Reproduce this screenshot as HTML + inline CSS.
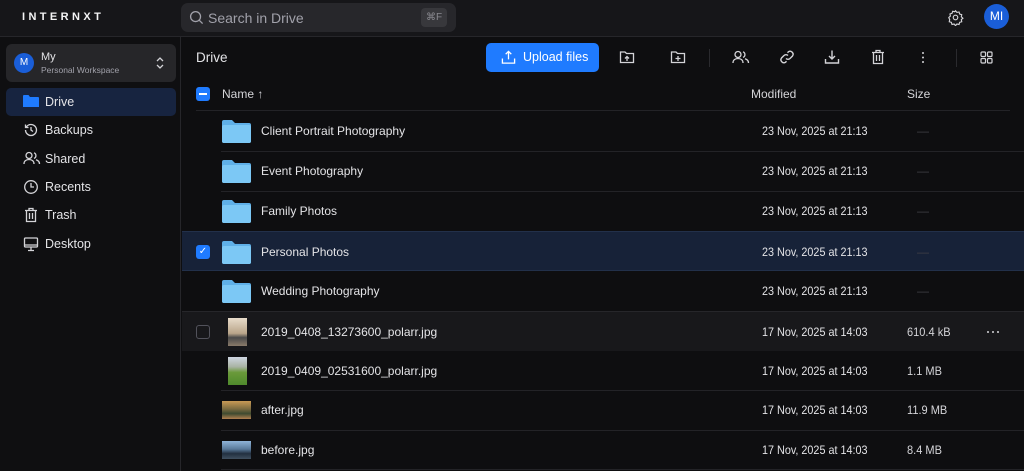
<!DOCTYPE html>
<html><head><style>
*{margin:0;padding:0;box-sizing:border-box}
body{width:1024px;height:471px;overflow:hidden;background:#0e0e10;font-family:"Liberation Sans",sans-serif;color:#e4e4e7;position:relative}
.top{position:absolute;left:0;top:0;width:1024px;height:37px;background:#161619;border-bottom:1px solid #26262a}
.logo{position:absolute;left:22px;top:11px;font-size:11px;font-weight:bold;letter-spacing:3.4px;color:#f4f4f5}
.search{position:absolute;left:181px;top:3px;width:275px;height:29px;background:#27272b;border-radius:7px}
.search span{position:absolute;left:27px;top:7px;font-size:14px;color:#a1a1aa}
.kbd{position:absolute;right:9px;top:5px;width:26px;height:19px;background:#38383c;border-radius:4px;font-size:10px;color:#8a8a90;text-align:center;line-height:19px}
.side{position:absolute;left:0;top:37px;width:181px;height:434px;background:#0f0f11;border-right:1px solid #26262a}
.ws{position:absolute;left:6px;top:7px;width:170px;height:38px;background:#262629;border-radius:6px}
.av{position:absolute;border-radius:50%;background:#1a5ed8;color:#fff;text-align:center}
.nav{position:absolute;left:6px;width:170px;height:28px;border-radius:5px;font-size:12.5px;color:#e4e4e7}
.nav span{position:absolute;left:39px;top:7px}
.nav svg{position:absolute;left:17px;top:6px}
.btn{position:absolute;left:486px;top:43px;width:113px;height:29px;background:#1f7bff;border-radius:5px;color:#fff;font-size:12.5px}
.ic{position:absolute;top:49px}
.row{position:absolute;left:182px;width:842px;height:40px}
.row .n{position:absolute;left:79px;top:13px;font-size:12px;color:#e4e4e7}
.row .m{position:absolute;left:580px;top:13px;font-size:12px;color:#e4e4e7;transform:scaleX(0.9);transform-origin:left;white-space:nowrap}
.row .s{position:absolute;left:725px;top:13px;font-size:12px;color:#d4d4d8;transform:scaleX(0.92);transform-origin:left;white-space:nowrap}
.row .d{position:absolute;left:735px;top:13px;font-size:12px;color:#3f3f45}
.line{position:absolute;height:1px;background:#232327}
.fold{position:absolute;left:40px;top:8px;width:29px;height:24px}
.cb{position:absolute;left:14px;top:13px;width:14px;height:14px;border-radius:3px}
</style></head><body>
<div class="top">
<div class="logo">INTERNXT</div>
<div class="search"><svg style="position:absolute;left:8px;top:7px" width="15" height="15" viewBox="0 0 16 16" fill="none" stroke="#a1a1aa" stroke-width="1.4"><circle cx="7" cy="7" r="5.3"/><path d="M11 11l3.5 3.5"/></svg><span>Search in Drive</span><div class="kbd">⌘F</div></div>
<svg style="position:absolute;left:947px;top:9px" width="17" height="17" viewBox="0 0 24 24" fill="none" stroke="#d4d4d8" stroke-width="1.6"><circle cx="12" cy="12" r="3.2"/><path d="M12 2.5l2 2.3 3-.6.9 2.9 2.9.9-.6 3 2.3 2-2.3 2 .6 3-2.9.9-.9 2.9-3-.6-2 2.3-2-2.3-3 .6-.9-2.9-2.9-.9.6-3L2.5 12l2.3-2-.6-3 2.9-.9.9-2.9 3 .6z"/></svg>
<div class="av" style="left:984px;top:4px;width:25px;height:25px;font-size:12px;line-height:25px">MI</div>
</div>
<div class="side">
<div class="ws"><div class="av" style="left:8px;top:9px;width:20px;height:20px;font-size:10px;line-height:20px">M</div>
<div style="position:absolute;left:35px;top:7px;font-size:11px;color:#e4e4e7">My</div>
<div style="position:absolute;left:35px;top:21px;font-size:8.5px;color:#a1a1aa">Personal Workspace</div>
<svg style="position:absolute;left:150px;top:13px" width="8" height="12" viewBox="0 0 8 12" fill="none" stroke="#d4d4d8" stroke-width="1.3"><path d="M1 4l3-3 3 3M1 8l3 3 3-3"/></svg></div>
<div class="nav" style="top:51px;background:#172440"><svg width="16" height="14" viewBox="0 0 16 14"><path d="M0 2a1 1 0 011-1h4.5l1.5 2h8a1 1 0 011 1v9H0z" fill="#1f7bff"/></svg><span>Drive</span></div>
<div class="nav" style="top:79px"><svg width="16" height="16" viewBox="0 0 16 16" fill="none" stroke="#d4d4d8" stroke-width="1.3"><path d="M2.5 8a5.5 5.5 0 105.5-5.5A5.5 5.5 0 003.3 5M2.5 2.5v3h3M8 5v3l2 1.5"/></svg><span>Backups</span></div>
<div class="nav" style="top:108px"><svg width="18" height="14" viewBox="0 0 18 14" fill="none" stroke="#d4d4d8" stroke-width="1.3"><circle cx="6" cy="4.5" r="3"/><path d="M1 13c0-3 2.2-4.5 5-4.5s5 1.5 5 4.5M11 1.8a3 3 0 010 5.6M13 8.8c2 .6 3.5 2 3.5 4.2"/></svg><span>Shared</span></div>
<div class="nav" style="top:136px"><svg width="16" height="16" viewBox="0 0 16 16" fill="none" stroke="#d4d4d8" stroke-width="1.3"><circle cx="8" cy="8" r="6.3"/><path d="M8 4v4h3"/></svg><span>Recents</span></div>
<div class="nav" style="top:164px"><svg width="16" height="16" viewBox="0 0 16 16" fill="none" stroke="#d4d4d8" stroke-width="1.3"><path d="M2 3.5h12M6 3.5V1.5h4v2M3.5 3.5v11h9v-11M6.5 6v6M9.5 6v6"/></svg><span>Trash</span></div>
<div class="nav" style="top:193px"><svg width="16" height="16" viewBox="0 0 16 16" fill="none" stroke="#d4d4d8" stroke-width="1.3"><rect x="1.5" y="2" width="13" height="9" rx="1"/><path d="M1.5 9h13M8 11v3M5 14.5h6"/></svg><span>Desktop</span></div>
</div>
<div style="position:absolute;left:196px;top:50px;font-size:13.5px;color:#e4e4e7">Drive</div>
<div class="btn"><svg style="position:absolute;left:15px;top:7px" width="15" height="15" viewBox="0 0 16 16" fill="none" stroke="#fff" stroke-width="1.4"><path d="M8 10V1.5M5 4.5l3-3 3 3M1.5 9v5h13V9"/></svg><span style="position:absolute;left:37px;top:7px">Upload files</span></div>
<svg class="ic" style="left:619px" width="16" height="16" viewBox="0 0 16 16" fill="none" stroke="#d4d4d8" stroke-width="1.3"><path d="M1.5 3h4.5l1.5 1.5h7v9h-13zM8 12V7.5M6 9.5l2-2 2 2"/></svg>
<svg class="ic" style="left:670px" width="16" height="16" viewBox="0 0 16 16" fill="none" stroke="#d4d4d8" stroke-width="1.3"><path d="M1.5 3h4.5l1.5 1.5h7v9h-13zM8 7v5M5.5 9.5h5"/></svg>
<div style="position:absolute;left:709px;top:49px;width:1px;height:18px;background:#2a2a2e"></div>
<svg class="ic" style="left:732px" width="18" height="16" viewBox="0 0 18 14" fill="none" stroke="#d4d4d8" stroke-width="1.3"><circle cx="6" cy="4.5" r="3"/><path d="M1 13c0-3 2.2-4.5 5-4.5s5 1.5 5 4.5M11 1.8a3 3 0 010 5.6M13 8.8c2 .6 3.5 2 3.5 4.2"/></svg>
<svg class="ic" style="left:779px" width="16" height="16" viewBox="0 0 16 16" fill="none" stroke="#d4d4d8" stroke-width="1.4"><path d="M7 9.5a3 3 0 004 0l2.5-2.5a3 3 0 00-4-4.3L8.5 3.7M9 6.5a3 3 0 00-4 0L2.5 9a3 3 0 004 4.3l1-1"/></svg>
<svg class="ic" style="left:824px" width="16" height="16" viewBox="0 0 16 16" fill="none" stroke="#d4d4d8" stroke-width="1.4"><path d="M8 1.5V10M5 7l3 3 3-3M1.5 10v4h13v-4"/></svg>
<svg class="ic" style="left:870px" width="16" height="16" viewBox="0 0 16 16" fill="none" stroke="#d4d4d8" stroke-width="1.3"><path d="M2 3.5h12M6 3.5V1.5h4v2M3.5 3.5v11h9v-11M6.5 6v6M9.5 6v6"/></svg>
<svg style="position:absolute;left:921px;top:51px" width="4" height="13" viewBox="0 0 4 13" fill="#d4d4d8"><circle cx="2" cy="2" r="1"/><circle cx="2" cy="6.5" r="1"/><circle cx="2" cy="11" r="1"/></svg>
<div style="position:absolute;left:956px;top:49px;width:1px;height:18px;background:#2a2a2e"></div>
<svg class="ic" style="left:980px;top:51px" width="13" height="13" viewBox="0 0 13 13" fill="none" stroke="#d4d4d8" stroke-width="1.2"><rect x="1" y="1" width="4.5" height="4.5" rx="1"/><rect x="7.5" y="1" width="4.5" height="4.5" rx="1"/><rect x="1" y="7.5" width="4.5" height="4.5" rx="1"/><rect x="7.5" y="7.5" width="4.5" height="4.5" rx="1"/></svg>
<div style="position:absolute;left:196px;top:87px;width:14px;height:14px;background:#1f7bff;border-radius:3px"><div style="position:absolute;left:3px;top:6px;width:8px;height:2px;background:#fff"></div></div>
<div style="position:absolute;left:222px;top:87px;font-size:12px;color:#d4d4d8">Name ↑</div>
<div style="position:absolute;left:751px;top:87px;font-size:12px;color:#d4d4d8">Modified</div>
<div style="position:absolute;left:907px;top:87px;font-size:12px;color:#d4d4d8">Size</div>
<div class="line" style="left:196px;top:110px;width:814px"></div>

<div class="row" style="top:111px"><svg class="fold" viewBox="0 0 29 24"><path d="M0 3a2 2 0 012-2h8l3 3h14a2 2 0 012 2v16a2 2 0 01-2 2H2a2 2 0 01-2-2z" fill="#5fb0e8"/><rect x="0" y="6" width="29" height="18" rx="2" fill="#7cc8f5"/></svg><span class="n">Client Portrait Photography</span><span class="m">23 Nov, 2025 at 21:13</span><span class="d">—</span></div>
<div class="line" style="left:221px;top:151px;width:803px"></div>
<div class="row" style="top:151px"><svg class="fold" viewBox="0 0 29 24"><path d="M0 3a2 2 0 012-2h8l3 3h14a2 2 0 012 2v16a2 2 0 01-2 2H2a2 2 0 01-2-2z" fill="#5fb0e8"/><rect x="0" y="6" width="29" height="18" rx="2" fill="#7cc8f5"/></svg><span class="n">Event Photography</span><span class="m">23 Nov, 2025 at 21:13</span><span class="d">—</span></div>
<div class="line" style="left:221px;top:191px;width:803px"></div>
<div class="row" style="top:191px"><svg class="fold" viewBox="0 0 29 24"><path d="M0 3a2 2 0 012-2h8l3 3h14a2 2 0 012 2v16a2 2 0 01-2 2H2a2 2 0 01-2-2z" fill="#5fb0e8"/><rect x="0" y="6" width="29" height="18" rx="2" fill="#7cc8f5"/></svg><span class="n">Family Photos</span><span class="m">23 Nov, 2025 at 21:13</span><span class="d">—</span></div>
<div class="row" style="top:231px;background:#172238;border-top:1px solid #22304a;border-bottom:1px solid #22304a"><div class="cb" style="background:#1f7bff;color:#fff;font-size:10px;text-align:center;line-height:14px">✓</div><svg class="fold" viewBox="0 0 29 24"><path d="M0 3a2 2 0 012-2h8l3 3h14a2 2 0 012 2v16a2 2 0 01-2 2H2a2 2 0 01-2-2z" fill="#5fb0e8"/><rect x="0" y="6" width="29" height="18" rx="2" fill="#7cc8f5"/></svg><span class="n">Personal Photos</span><span class="m">23 Nov, 2025 at 21:13</span><span class="d">—</span></div>
<div class="row" style="top:271px"><svg class="fold" viewBox="0 0 29 24"><path d="M0 3a2 2 0 012-2h8l3 3h14a2 2 0 012 2v16a2 2 0 01-2 2H2a2 2 0 01-2-2z" fill="#5fb0e8"/><rect x="0" y="6" width="29" height="18" rx="2" fill="#7cc8f5"/></svg><span class="n">Wedding Photography</span><span class="m">23 Nov, 2025 at 21:13</span><span class="d">—</span></div>
<div class="row" style="top:311px;background:#18181b;border-top:1px solid #26262a"><div class="cb" style="border:1px solid #52525b"></div><div style="position:absolute;left:46px;top:6px;width:19px;height:28px;background:linear-gradient(#e8dccb,#b9a58a 55%,#4a4a4a 70%,#8a7a6a)"></div><span class="n">2019_0408_13273600_polarr.jpg</span><span class="m">17 Nov, 2025 at 14:03</span><span class="s">610.4 kB</span><svg style="position:absolute;left:804px;top:18px" width="14" height="4" viewBox="0 0 14 4" fill="#d4d4d8"><circle cx="2" cy="2" r="1"/><circle cx="7" cy="2" r="1"/><circle cx="12" cy="2" r="1"/></svg></div>
<div class="row" style="top:351px"><div style="position:absolute;left:46px;top:6px;width:19px;height:28px;background:linear-gradient(#cfd6e2,#a9b3a4 35%,#6a9a3a 55%,#4f8a2c)"></div><span class="n">2019_0409_02531600_polarr.jpg</span><span class="m">17 Nov, 2025 at 14:03</span><span class="s">1.1 MB</span></div>
<div class="line" style="left:221px;top:390px;width:803px"></div>
<div class="row" style="top:390px"><div style="position:absolute;left:40px;top:11px;width:29px;height:18px;background:linear-gradient(#c99a55,#7a6a40 45%,#3e4a30 70%,#b08050)"></div><span class="n">after.jpg</span><span class="m">17 Nov, 2025 at 14:03</span><span class="s">11.9 MB</span></div>
<div class="line" style="left:221px;top:430px;width:803px"></div>
<div class="row" style="top:430px"><div style="position:absolute;left:40px;top:11px;width:29px;height:18px;background:linear-gradient(#8fb4d8,#5a7a9a 45%,#223040 70%,#405060)"></div><span class="n">before.jpg</span><span class="m">17 Nov, 2025 at 14:03</span><span class="s">8.4 MB</span></div>
<div class="line" style="left:221px;top:469px;width:803px"></div>
</body></html>
